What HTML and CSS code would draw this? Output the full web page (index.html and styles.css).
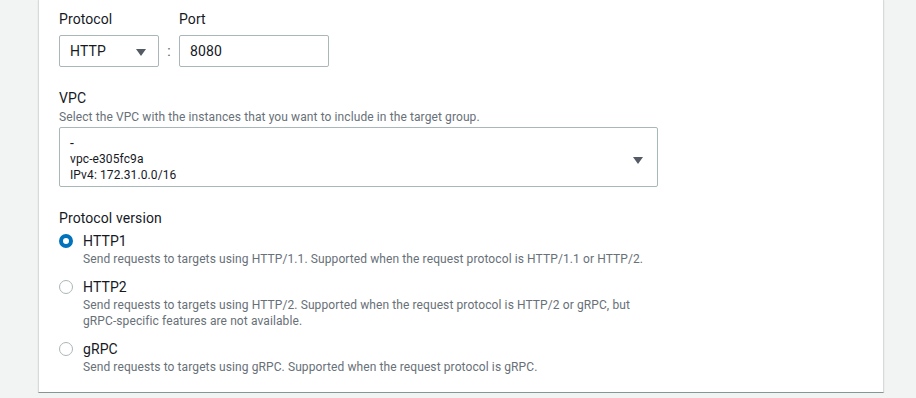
FILE: index.html
```html
<!DOCTYPE html>
<html lang="en">
<head>
  <meta charset="UTF-8">
  <meta name="viewport" content="width=device-width, initial-scale=1.0">
  <title>Target group - basic configuration</title>
  <link rel="stylesheet" href="styles.css">
</head>
<body>

<div class="card">
  <div class="row">
    <div class="field">
      <div class="label">Protocol</div>
      <div class="select select-small">
        <span>HTTP</span>
        <span class="caret"></span>
      </div>
    </div>
    <div class="colon">:</div>
    <div class="field">
      <div class="label">Port</div>
      <div class="input">8080</div>
    </div>
  </div>

  <div class="section">
    <div class="label">VPC</div>
    <div class="desc">Select the VPC with the instances that you want to include in the target group.</div>
    <div class="select select-vpc">
      <div class="vpc-lines">
        <div class="vpc-dash">-</div>
        <div>vpc-e305fc9a</div>
        <div>IPv4: 172.31.0.0/16</div>
      </div>
      <span class="caret"></span>
    </div>
  </div>

  <div class="section">
    <div class="label">Protocol version</div>
    <div class="radios">
      <div class="radio checked">
        <span class="dot"></span>
        <div>
          <div class="radio-label">HTTP1</div>
          <div class="desc">Send requests to targets using HTTP/1.1. Supported when the request protocol is HTTP/1.1 or HTTP/2.</div>
        </div>
      </div>
      <div class="radio">
        <span class="dot"></span>
        <div>
          <div class="radio-label">HTTP2</div>
          <div class="desc">Send requests to targets using HTTP/2. Supported when the request protocol is HTTP/2 or gRPC, but<br>gRPC-specific features are not available.</div>
        </div>
      </div>
      <div class="radio">
        <span class="dot"></span>
        <div>
          <div class="radio-label">gRPC</div>
          <div class="desc">Send requests to targets using gRPC. Supported when the request protocol is gRPC.</div>
        </div>
      </div>
    </div>
  </div>
</div>

</body>
</html>
```

FILE: styles.css
```css
body {
  margin: 0;
  background: #f2f3f3;
  font-family: Roboto, "Liberation Sans", Arial, sans-serif;
  color: #16191f;
}

.card {
  margin-left: 38px;
  width: 804px;
  background: #fff;
  border: 1px solid #d5dbdb;
  border-top: none;
  border-bottom-color: #879596;
  box-shadow: 0 1px 1px 0 rgba(0, 28, 36, 0.15);
  padding: 8px 20px 17px 20px;
}

.label {
  font-size: 14px;
  line-height: 22px;
  letter-spacing: 0.1px;
}

.desc {
  font-size: 12px;
  line-height: 16px;
  color: #687078;
  letter-spacing: 0.1px;
}

.row {
  display: flex;
  align-items: flex-end;
}

.field .label {
  margin-bottom: 5px;
}

.select,
.input {
  box-sizing: border-box;
  border: 1px solid #aab7b8;
  border-radius: 2px;
  font-size: 14px;
  color: #16191f;
  display: flex;
  align-items: center;
  padding-left: 10px;
  letter-spacing: 0.1px;
}

.select-small {
  width: 100px;
  height: 32px;
  justify-content: space-between;
  padding-right: 12px;
}

.input {
  width: 150px;
  height: 32px;
}

.colon {
  width: 20px;
  height: 32px;
  line-height: 32px;
  text-align: center;
  font-size: 14px;
  color: #545b64;
}

.caret {
  width: 0;
  height: 0;
  margin-top: 2px;
  border-left: 5px solid transparent;
  border-right: 5px solid transparent;
  border-top: 7px solid #545b64;
}

.section {
  margin-top: 20px;
}

.select-vpc {
  margin-top: 2px;
  width: 599px;
  height: 60px;
  justify-content: space-between;
  padding: 7px 14px 3px 10px;
  align-items: center;
}

.vpc-lines {
  align-self: flex-start;
  font-size: 12px;
  line-height: 16px;
  color: #16191f;
}

.vpc-dash {
  font-size: 14px;
}

.radios {
  margin-top: 2px;
  display: flex;
  flex-direction: column;
  gap: 10px;
}

.radio {
  display: flex;
  gap: 10px;
}

.radio-label {
  font-size: 14px;
  line-height: 20px;
  letter-spacing: 0.1px;
}

.dot {
  box-sizing: border-box;
  flex: none;
  width: 14px;
  height: 14px;
  margin-top: 3px;
  border-radius: 50%;
  border: 1px solid #aab7b8;
  background: #fff;
}

.checked .dot {
  border: 4px solid #0073bb;
}
```
